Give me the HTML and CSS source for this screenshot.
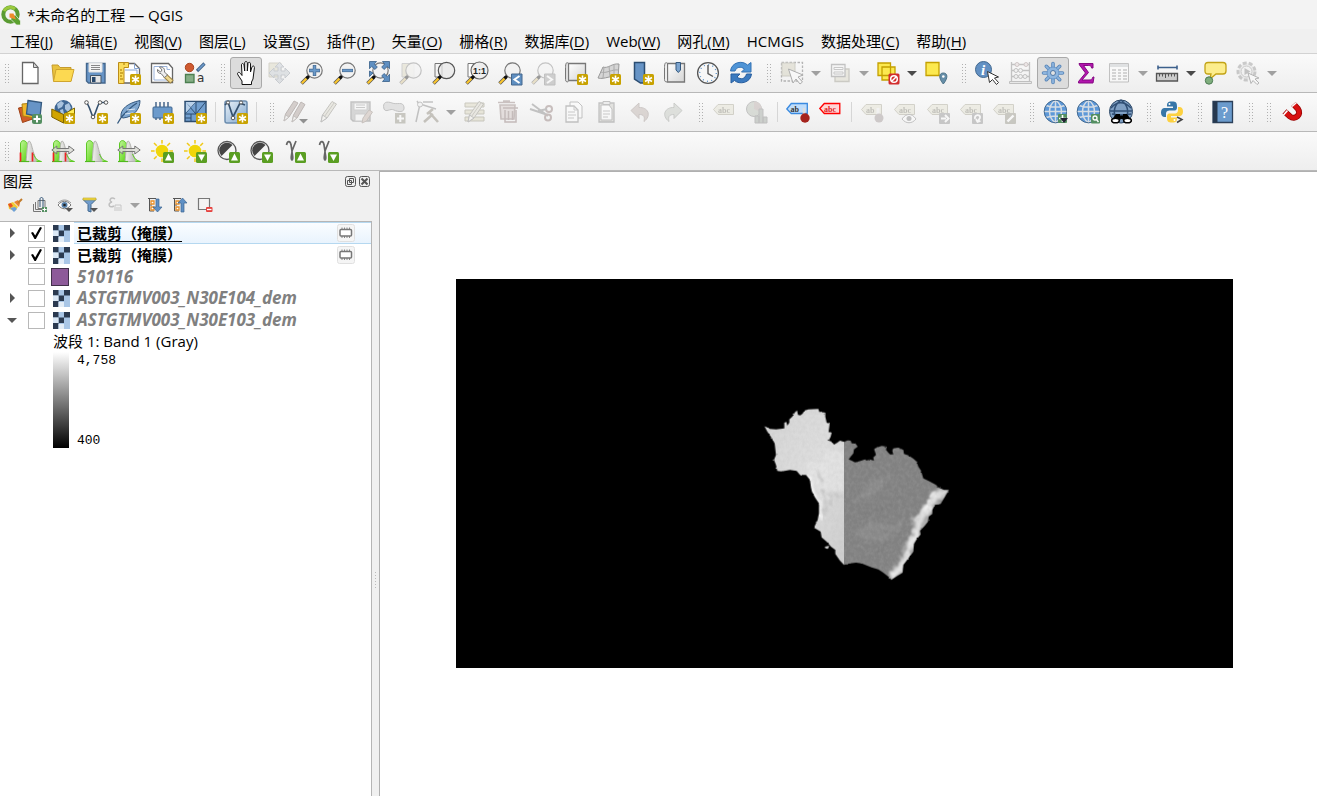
FILE: index.html
```html
<!DOCTYPE html>
<html lang="zh-CN">
<head>
<meta charset="utf-8">
<title>*未命名的工程 — QGIS</title>
<link rel="stylesheet" href="styles.css">
</head>
<body>
<svg class="defs" aria-hidden="true">
  <defs>
    <linearGradient id="g-paper" x1="0" x2="1" y1="0" y2="1"><stop offset="0" stop-color="#fff"/><stop offset="1" stop-color="#d4d4d4"/></linearGradient>
    <linearGradient id="g-blue" x1="0" x2="1" y1="0" y2="1"><stop offset="0" stop-color="#eaf1f8"/><stop offset="1" stop-color="#7fa6cd"/></linearGradient>
    <linearGradient id="g-green" x1="0" x2="1" y1="0" y2="1"><stop offset="0" stop-color="#c2f59c"/><stop offset=".6" stop-color="#7be03c"/><stop offset="1" stop-color="#4fc010"/></linearGradient>
    <linearGradient id="g-gray" x1="0" x2="1" y1="0" y2="0"><stop offset="0" stop-color="#f4f4f0"/><stop offset="1" stop-color="#aaa"/></linearGradient>
  </defs>
  <symbol id="star" viewBox="0 0 24 24"><rect x="13" y="13" width="11" height="11" rx="1.5" fill="#c8a200"/><path d="M18.5 14.5v8M15 16.5l7 4M22 16.5l-7 4" stroke="#fff" stroke-width="1.6"/></symbol>
  <symbol id="up" viewBox="0 0 24 24"><rect x="13" y="13" width="11" height="11" rx="1.5" fill="#5a9e22"/><path d="M18.500 14.500l3.500 7h-7z" fill="#fff"/></symbol>
  <symbol id="down" viewBox="0 0 24 24"><rect x="13" y="13" width="11" height="11" rx="1.500" fill="#5a9e22"/><path d="M18.500 22l3.500-6.500h-7z" fill="#fff"/></symbol>
  <symbol id="handle" viewBox="0 0 24 24"><path d="M1.500 22.500L8 16" stroke="#555" stroke-width="3.600"/><path d="M1.800 22.200L7 17" stroke="#fbc62e" stroke-width="2.200"/><path d="M6.500 17.500L9 15" stroke="#111" stroke-width="3"/></symbol>
  <symbol id="lens" viewBox="0 0 24 24"><circle cx="14.500" cy="9.500" r="7.700" fill="#f1f1f1" fill-opacity=".85" stroke="#777" stroke-width="1.200"/><use href="#handle"/></symbol>
  <symbol id="hist" viewBox="0 0 24 24"><path d="M2.500 22.500V5C3 0 8 1 9.500 5l2 17.500z" fill="url(#g-green)" stroke="#5cc823"/><path d="M8 22.500C9 16 9 2 11 2s3 7 5 13 3 6 5 7.500z" fill="url(#g-gray)" stroke="#b2b2ae"/><path d="M15.500 15c2 5 4 6.500 8 7.500h-5" fill="#9ee36f" stroke="#5cc823"/><path d="M1 22.500h10" stroke="#4fb91d" stroke-width="1.200"/></symbol>
  <symbol id="sides" viewBox="0 0 24 24"><path d="M.8 11l5-4v2.500h12V7l5.400 4-5.400 4v-2.500h-12V15z" fill="#dcdcd6" fill-opacity=".8" stroke="#777"/></symbol>
  <symbol id="tag" viewBox="0 0 24 24"><path d="M1.500 9.500l4.500-5h15.500v10H6z" fill="#e5dfae" stroke="#a49d6b"/></symbol>
  <symbol id="globe" viewBox="0 0 24 24"><circle cx="12.500" cy="11.500" r="11.300" fill="#5d98d8"/><path d="M12.500 0v23M1 11.500h23M3 5.500c6 2 13 2 19 0M3 17.500c6-2 13-2 19 0M12.500 0c-8 6-8 17 0 23M12.500 0c8 6 8 17 0 23" fill="none" stroke="#d6dde4" stroke-width="1.500"/><circle cx="12.500" cy="11.500" r="11.300" fill="none" stroke="#41688f"/></symbol>
  <symbol id="raster" viewBox="0 0 17 17"><rect width="17" height="17" fill="#a9c6e6"/><path d="M0 0h5.500v5.500H0zM11 0h6v5.500h-6zM5.500 5.500H11V11H5.500zM0 11h5.500v6H0z" fill="#2b3a50"/><path d="M5.500 12H11v5H5.500z" fill="#e3edf7"/><path d="M0 5.500h5.500V11H0z" fill="#dbe8f5"/></symbol>
  <symbol id="chip" viewBox="0 0 18 18"><rect x=".5" y=".5" width="17" height="17" rx="2" fill="#f5f5f5" stroke="#e0e0e0"/><path d="M5 3.500v10.500M7.500 3.500v10.500M10 3.500v10.500M12.500 3.500v10.500" stroke="#888"/><rect x="3" y="5.500" width="11.500" height="6.500" rx="1" fill="#fff" stroke="#777" stroke-width="1.500"/></symbol>
  <symbol id="pencil" viewBox="0 0 24 24"><path d="M5 22l1.500-7L16 1.500l4.500 2.500L11 18z" fill="#ddd6b0" stroke="#817b60"/><path d="M5 22l1.500-7 4.500 3z" fill="#f5f0df" stroke="#777"/><path d="M8.500 16.500L18 3" stroke="#968e6a"/></symbol>
</svg>

<header class="titlebar">
  <svg class="logo" viewBox="0 0 20 20"><circle cx="9.500" cy="9.500" r="7.200" fill="none" stroke="#5a9b32" stroke-width="4"/><path d="M3 6a7.200 7.200 0 0 1 11-2" fill="none" stroke="#9bc93c" stroke-width="3"/><path d="M10 10l4.500.2 5 5.800V20h-4L10 14.500z" fill="#5ca12f" stroke="#f3f3f3" stroke-width=".7"/><path d="M8.500 8.500h4l2.500 6-6.500-2z" fill="#ee8b2c"/></svg>
  <h1>*未命名的工程 — QGIS</h1>
</header>

<nav class="menubar" aria-label="菜单">
  <button>工程(<u>J</u>)</button><button>编辑(<u>E</u>)</button><button>视图(<u>V</u>)</button><button>图层(<u>L</u>)</button><button>设置(<u>S</u>)</button><button>插件(<u>P</u>)</button><button>矢量(<u>O</u>)</button><button>栅格(<u>R</u>)</button><button>数据库(<u>D</u>)</button><button>Web(<u>W</u>)</button><button>网孔(<u>M</u>)</button><button>HCMGIS</button><button>数据处理(<u>C</u>)</button><button>帮助(<u>H</u>)</button>
</nav>

<div class="toolbar" role="toolbar" aria-label="工程与地图导航">
  <i class="grip"></i>
  <button aria-label="新建工程"><svg viewBox="0 0 24 24"><path d="M4.500 1.500h11l4.500 5v16H4.500z" fill="#fff" stroke="#666" stroke-width="1.300"/><path d="M15.500 1.500v5H20z" fill="#d8d8d8" stroke="#666"/></svg></button>
  <button aria-label="打开工程"><svg viewBox="0 0 24 24"><path d="M1 4h6l2 2.500h11V20H2.500z" fill="#e9c23e" stroke="#c59b2d"/><path d="M2.500 20.500L5 8.500h18l-3 12z" fill="#fcd951" stroke="#d0a52e"/></svg></button>
  <button aria-label="保存工程"><svg viewBox="0 0 24 24"><path d="M2.500 2.500h18.500v19.500H4.500l-2-2z" fill="#6794c6" stroke="#44678d" stroke-width="1.400"/><path d="M5 2h13v9H5z" fill="#f5f5f5" stroke="#ddd"/><path d="M7 4.500h9M7 6.500h9M7 8.500h9" stroke="#888"/><path d="M6.500 14.500h10.500V22H6.500z" fill="#e4e4e4" stroke="#456"/><path d="M8 16h3.500v5H8z" fill="#27476b"/></svg></button>
  <button aria-label="新建布局"><svg viewBox="0 0 24 24"><path d="M7 2.500h10.500l5 5V22H4z" fill="#fff" stroke="#666" stroke-width="1.300"/><path d="M17.500 2.500v5h5M8 9h12v10" fill="none" stroke="#88a6d4"/><path d="M1.500 1.500h10v5H7v16H1.500z" fill="#fbdc5b" stroke="#bb8c18"/><path d="M3 18h3M3 15h2M3 12h3M3 9h2M7 2v2" stroke="#a47400"/><use href="#star"/></svg></button>
  <button aria-label="布局管理器"><svg viewBox="0 0 24 24"><path d="M1.500 2.500h17l4 4.500v14.500h-21z" fill="#fff" stroke="#666" stroke-width="1.300"/><path d="M4 5.500h13v3h3M4 5.500V19h13" fill="none" stroke="#9cb4db"/><path d="M15 14.500l7 6.500" stroke="#9c8040" stroke-width="5"/><path d="M15.500 15l6 5.500" stroke="#eed890" stroke-width="3"/><path d="M9.500 6c3.500-.5 5.500 1.500 5 5l3 3-3 2.500-3.500-4C8.500 12.500 7 11 7.500 8.500l3 2.500 1.500-2z" fill="#eee" stroke="#777"/></svg></button>
  <button aria-label="样式管理器"><svg viewBox="0 0 24 24"><circle cx="6.500" cy="6.500" r="4.200" fill="#cf5a30" stroke="#a94420"/><path d="M14 10l7.500-7.500" stroke="#44678d" stroke-width="3.200"/><path d="M15 9l6-6" stroke="#6e9bcb" stroke-width="1.600"/><path d="M2.500 13.500h8.500v8H2.500z" fill="#86ae86" stroke="#4c7f50" stroke-width="1.300"/><text x="14" y="21" class="glyph-a">a</text></svg></button>
  <i class="grip"></i>
  <button class="active" aria-label="平移地图" aria-pressed="true"><svg viewBox="0 0 24 24"><path d="M8 23.500V20L4 14c-1.500-2.500 1-3.500 2.500-1.500L8 14.500 7.500 4c0-2 2-2 2.500 0l.7 6V2c0-2 2.600-2 2.600 0v8l.7-7.500c.3-1.800 2.500-1.500 2.500.3L16.500 11l1.500-5c.8-1.800 2.700-1 2.400.8L19 18l-1.500 3v2.500z" fill="#fff" stroke="#111"/></svg></button>
  <button class="off" aria-label="平移到选区"><svg viewBox="0 0 24 24"><path d="M2 2h12v14H2z" fill="#ddd292" stroke="#aaa06b"/><path d="M12.500 1.500L17 6h-3v4h4V7l5 5-5 5v-3h-4v4h3l-4.500 4.500L8 18h3v-4H7v3l-5-5 5-5v3h4V6H8z" fill="#b6c6d8" stroke="#7e94ac"/></svg></button>
  <button aria-label="放大"><svg viewBox="0 0 24 24"><use href="#lens"/><path d="M14.500 4v11M9 9.500h11" stroke="#44678d" stroke-width="3.400"/><path d="M14.500 4.500v10M9.500 9.500h10" stroke="#6a9aca" stroke-width="2"/></svg></button>
  <button aria-label="缩小"><svg viewBox="0 0 24 24"><use href="#lens"/><path d="M9 9.500h11" stroke="#44678d" stroke-width="3.200"/><path d="M9.500 9.500h10" stroke="#6a9aca" stroke-width="2"/></svg></button>
  <button aria-label="全图显示"><svg viewBox="0 0 24 24"><use href="#lens"/><path d="M3.500.5h7L8.300 3l3 3L9 8.500l-3.300-3-2.200 2.200zM23.500.5h-7L18.700 3l-3 3L18 8.500l3.300-3 2.200 2.200zM23.500 20.500h-7l2.200-2.500-3-3 2.300-2.500 3.300 3 2.200-2.200zM3.500 10v5.500L7 12z" fill="#5f8fc1" stroke="#365e88" stroke-width=".8"/></svg></button>
  <button class="off" aria-label="缩放到选区"><svg viewBox="0 0 24 24"><path d="M3 2.500h12V16H3z" fill="#e0d58d" stroke="#999"/><use href="#lens"/></svg></button>
  <button aria-label="缩放到图层"><svg viewBox="0 0 24 24"><path d="M3 2.500h9V16H3z" fill="#f5f5f5" stroke="#777"/><circle cx="14.500" cy="9.500" r="8.200" fill="#ececec" stroke="#555" stroke-width="1.200"/><path d="M10 3.500v12" stroke="#c9c9c9"/><use href="#handle"/></svg></button>
  <button aria-label="缩放到原始分辨率"><svg viewBox="0 0 24 24"><path d="M3 2.500h9V16H3z" fill="#fff" stroke="#777"/><circle cx="14.500" cy="9.500" r="8.500" fill="#eee" stroke="#666" stroke-width="1.200"/><use href="#handle"/><text x="8" y="13" class="ratio">1:1</text></svg></button>
  <button aria-label="上一视图"><svg viewBox="0 0 24 24"><use href="#lens"/><path d="M13.500 13h10.500v11H13.500z" fill="#5f8fc1" stroke="#44678d"/><path d="M21.500 15l-5 3.500 5 3.500" fill="none" stroke="#fff" stroke-width="2"/></svg></button>
  <button class="off" aria-label="下一视图"><svg viewBox="0 0 24 24"><use href="#lens"/><path d="M13.500 13h10.500v11H13.500z" fill="#999" stroke="#777"/><path d="M16 15l5 3.500-5 3.500" fill="none" stroke="#fff" stroke-width="2"/></svg></button>
  <button aria-label="新建地图视图"><svg viewBox="0 0 24 24"><path d="M4.500 2.500h17v17h-17z" fill="url(#g-paper)" stroke="#777" stroke-width="1.300"/><path d="M4.500 2.500c-3-3-3 3-3 4v12c0 3 3 3 3 1z" fill="#ddd" stroke="#777"/><use href="#star"/></svg></button>
  <button aria-label="新建3D地图视图"><svg viewBox="0 0 24 24"><path d="M1 17L6 6c5 2 9-4 16-3l-1 14c-7-4-13 2-20 0z" fill="#d5d5d5" stroke="#999"/><path d="M3.500 11c6 2 11-3 18-2M7 6L6 17M12 5l1 11M17 3v13" fill="none" stroke="#aaa"/><use href="#star"/></svg></button>
  <button aria-label="新建空间书签"><svg viewBox="0 0 24 24"><path d="M4.500 1.500h10v20.500h-4l-6-4z" fill="#6794c6" stroke="#2b4d72" stroke-width="1.500"/><use href="#star"/></svg></button>
  <button aria-label="显示空间书签"><svg viewBox="0 0 24 24"><path d="M4.500 2.500h17v18.500h-17z" fill="url(#g-paper)" stroke="#777" stroke-width="1.300"/><path d="M4.500 2.500c-3-3-3 3-3 4v12c0 3 3 3 3 1z" fill="#eee" stroke="#777"/><path d="M13 1.500h4.500V9l-2.200 2.500L13 9z" fill="#7ca4cf" stroke="#34597f"/></svg></button>
  <button aria-label="时态控制器"><svg viewBox="0 0 24 24"><circle cx="12" cy="12" r="10.400" fill="#f7f7f7" stroke="#555" stroke-width="1.300"/><circle cx="12" cy="12" r="8.300" fill="none" stroke="#5b92c9" stroke-width="1.300" stroke-dasharray="1 3.340"/><path d="M12 4v8.500l5 3" fill="none" stroke="#555" stroke-width="1.400"/></svg></button>
  <button aria-label="刷新"><svg viewBox="0 0 24 24"><path d="M1.500 10c1-9 12-11 17-6l3.500-2.500v9.500h-9.500l3-3c-4-3-8-2-9.500 2z" fill="#4f94d6" stroke="#3472b4"/><path d="M22.500 13c-1 9-12 11-17 6.500L2 22v-9h9l-3 3c4 3 8 2 9.500-3z" fill="#3b7abf" stroke="#285f9f"/></svg></button>
  <i class="grip"></i>
  <button class="off" aria-label="选择要素"><svg viewBox="0 0 24 24"><path d="M1.500 1.500h21v18.500h-21z" fill="none" stroke="#555" stroke-width="1.300" stroke-dasharray="2.500 1.500"/><path d="M2 2h13v13H2z" fill="#d1cb91" stroke="#999366"/><path d="M8.500 8l14.500 6-5 2 4.500 5-2.500 2-4-5-3 4z" fill="#fff" stroke="#444"/></svg></button><button class="drop off" aria-label="选择菜单"></button>
  <button class="off" aria-label="按值选择"><svg viewBox="0 0 24 24"><path d="M7 8h14v12.500H7z" fill="#ddd6a5" stroke="#99936e" stroke-width="1.400"/><path d="M3.500 3.500H17v12H3.500z" fill="#f4f4f4" stroke="#777" stroke-width="1.300"/><path d="M6 6.500h9v2H6zM6 11h9v2H6z" fill="#fff" stroke="#888"/></svg></button><button class="drop off" aria-label="按值选择菜单"></button>
  <button aria-label="取消选择"><svg viewBox="0 0 24 24"><path d="M2 2h12.500v12.500H2zM6 6h13v13H6z" fill="#fce94f" stroke="#c4a000" stroke-width="1.300"/><rect x="12.500" y="12.500" width="11" height="11" rx="1.500" fill="#d22d2d"/><circle cx="18" cy="18" r="3.300" fill="none" stroke="#fff" stroke-width="1.500"/><path d="M15.500 20.500l5-5" stroke="#fff" stroke-width="1.500"/></svg></button><button class="drop" aria-label="取消选择菜单"></button>
  <button aria-label="按位置选择"><svg viewBox="0 0 24 24"><path d="M2 1.500h13v13H2z" fill="#fce94f" stroke="#c4a000" stroke-width="1.300"/><path d="M19.300 23c-5-6-4.500-11 0-11s5 5 0 11z" fill="#668ea8" stroke="#4c7288"/><circle cx="19.300" cy="15.500" r="1.300" fill="#fff"/></svg></button>
  <i class="grip"></i>
  <button aria-label="识别要素"><svg viewBox="0 0 24 24"><circle cx="8.500" cy="8.500" r="8" fill="#6290c3" stroke="#41688f"/><text x="6" y="13.500" class="info">i</text><path d="M12.500 10.500l11 5.500-4 1 4 4.500-2 2-4-5-3 3z" fill="#fff" stroke="#333"/></svg></button>
  <button class="off" aria-label="字段计算器"><svg viewBox="0 0 24 24"><path d="M3.500 1v20M21.500 1v20M3 3.500h19M3 9.500h19M3 15.500h19" fill="none" stroke="#777" stroke-width="1.300"/><path d="M1.500 20.500h22v2h-22z" fill="#ddd" stroke="#777"/><g fill="#eee" stroke="#777"><circle cx="8" cy="9.500" r="2"/><circle cx="12.500" cy="9.500" r="2"/><circle cx="8" cy="15.500" r="2"/><circle cx="12.500" cy="15.500" r="2"/><circle cx="17" cy="15.500" r="2"/></g><g fill="#ecc" stroke="#a77"><circle cx="9" cy="3.500" r="2"/><circle cx="18" cy="3.500" r="2"/></g></svg></button>
  <button class="active" aria-label="处理工具箱" aria-pressed="true"><svg viewBox="0 0 24 24"><g stroke="#5b87b8" stroke-width="3.600" stroke-linecap="round"><path d="M12 2.500v19M2.500 12h19M5.300 5.300l13.400 13.400M18.700 5.300L5.300 18.700"/></g><g stroke="#8db5df" stroke-width="1.800" stroke-linecap="round"><path d="M12 2.500v19M2.500 12h19M5.300 5.300l13.400 13.400M18.700 5.300L5.300 18.700"/></g><circle cx="12" cy="12" r="6" fill="#8db5df" stroke="#6997c9"/><circle cx="12" cy="12" r="2.500" fill="#e3e3e3" stroke="#5077a5"/></svg></button>
  <button aria-label="统计摘要"><svg viewBox="0 0 24 24"><path d="M5 2.500h14V7h-1.500c0-2-1-2.500-3-2.500H9.500l5 7L8 19h7c2 0 3-.5 4-3h1l-1 6H4.500v-1.500l7-8.500-6-8z" fill="#b215ae" stroke="#850a82"/></svg></button>
  <button class="off" aria-label="打开属性表"><svg viewBox="0 0 24 24"><path d="M2.500 2.500h19v18.500h-19z" fill="#fff" stroke="#777"/><path d="M3 3h18v3H3z" fill="#bbc3cc"/><path d="M5 9h4M11 9h3M16 9h4M5 12h4M11 12h3M16 12h4M5 15h4M11 15h3M16 15h4M5 18h4M11 18h3M16 18h4" stroke="#888" stroke-width="1.300"/></svg></button><button class="drop off" aria-label="属性表菜单"></button>
  <button aria-label="测量"><svg viewBox="0 0 24 24"><path d="M3 6.500h19M3 4.500v4M22 4.500v4" stroke="#3c608c" stroke-width="1.600"/><path d="M1.500 12.500h21v7.500h-21z" fill="#ccc" stroke="#555" stroke-width="1.300"/><path d="M4.500 12.500v3M7.500 12.500v3M10.500 12.500v4.500M13.500 12.500v3M16.500 12.500v3M19.500 12.500v3" stroke="#555"/></svg></button><button class="drop" aria-label="测量菜单"></button>
  <button aria-label="地图提示"><svg viewBox="0 0 24 24"><path d="M5 1.500h15q3 0 3 3V10q0 3-3 3h-7l-6 5 1-5H5q-3 0-3-3V4.500q0-3 3-3z" fill="#fced8c" stroke="#c2a316" stroke-width="1.300"/><circle cx="6" cy="19.500" r="3.700" fill="#7fae7d" stroke="#4c7a52"/></svg></button>
  <button class="off" aria-label="运行动作"><svg viewBox="0 0 24 24"><circle cx="10.500" cy="10.500" r="8.500" fill="#ddd" stroke="#888" stroke-width="3" stroke-dasharray="4 2"/><circle cx="10.500" cy="10.500" r="5.500" fill="#eee" stroke="#888"/><path d="M8.500 7v7l6-3.500z" fill="#777"/><path d="M12 12l11 5-4 1 4 4-2 1.500-4-4-2 3z" fill="#fff" stroke="#555"/></svg></button><button class="drop off" aria-label="动作菜单"></button>
</div>

<div class="toolbar" role="toolbar" aria-label="图层与编辑">
  <i class="grip"></i>
  <button aria-label="数据源管理器"><svg viewBox="0 0 24 24"><path d="M.5 8l11-2 3 13-10 3.500z" fill="#d05d28" stroke="#9e4015"/><path d="M4 4l12-1 1 15-12-2z" fill="#f0b72b" stroke="#ae8010"/><path d="M10 .5l13.500 2L22 17 8.500 14z" fill="#6794c6" stroke="#34597f" stroke-width="1.300"/><rect x="14" y="14" width="10" height="10" rx="2" fill="#548f61"/><path d="M19 15.500v7M15.500 19h7" stroke="#fff" stroke-width="2"/></svg></button>
  <button aria-label="新建GeoPackage图层"><svg viewBox="0 0 24 24"><circle cx="12.500" cy="9" r="9" fill="#3f6794"/><path d="M6 4l4-3 3 2-2 4-4 2zM14 5l4-2 2 5-3 4-3-3zM9 10l3-1 1 5h-3z" fill="#a9c3de"/><path d="M.8 9l11.700 5.500V23L.8 17z" fill="#d1a400" stroke="#7c6100"/><path d="M12.500 14.500L23.500 8v9l-11 6z" fill="#ffec55" stroke="#806800"/><use href="#star"/></svg></button>
  <button aria-label="新建Shapefile图层"><svg viewBox="0 0 24 24"><path d="M2.500 2.500C5 5 7 13 9 17c3-3 4-12 7-14.500h6" fill="none" stroke="#34506e" stroke-width="1.600"/><g fill="#fff" stroke="#555"><circle cx="2.500" cy="2.500" r="1.800"/><circle cx="9" cy="17" r="1.800"/><circle cx="16" cy="2.500" r="1.800"/><circle cx="22" cy="2.500" r="1.800"/></g><use href="#star"/></svg></button>
  <button aria-label="新建SpatiaLite图层"><svg viewBox="0 0 24 24"><path d="M4 17C3 9 11 3 23 .5 23 9 17 17 6 18z" fill="#7fa7d0" stroke="#34597f"/><path d="M.5 23.500L4.500 17C9 12 15 6 20 3" fill="none" stroke="#34597f" stroke-width="1.300"/><path d="M8 14l8-1M10 10l8-1" stroke="#dce8f4"/><use href="#star"/></svg></button>
  <button aria-label="新建临时图层"><svg viewBox="0 0 24 24"><path d="M6 2v18M10 2v18M14 2v18M18 2v18" stroke="#526f91" stroke-width="1.600"/><rect x="3" y="7" width="19" height="11" rx="1" fill="#6c9acb" stroke="#3e6690"/><use href="#star"/></svg></button>
  <button aria-label="新建网格图层"><svg viewBox="0 0 24 24"><path d="M2 1.500h21v20H2z" fill="#729fcf" stroke="#2d4d70" stroke-width="1.400"/><path d="M2 14h21M13 1.500v12.500M8 14v7.500M2 1.500L13 14M13 1.500L2 14M13 14L23 1.500M2 18h6" fill="none" stroke="#2d4d70"/><path d="M2.500 2h10L8 7zM3 2.500v10L7.500 7.500z" fill="#b9d1e9"/><use href="#star"/></svg></button>
  <i class="sep"></i>
  <button aria-label="新建虚拟图层"><svg viewBox="0 0 24 24"><rect x="1" y="1" width="22" height="22" rx="2" fill="url(#g-blue)" stroke="#6b8cae" stroke-width="1.500"/><path d="M1 5l3-3 5 15 7-14 5 2" fill="none" stroke="#34506e" stroke-width="1.700"/><g fill="#fff" stroke="#555"><circle cx="4" cy="2.500" r="1.600"/><circle cx="9" cy="18" r="1.800"/><circle cx="17" cy="2.500" r="1.600"/></g><use href="#star"/></svg></button>
  <i class="sep"></i>
  <i class="grip"></i>
  <button class="off" aria-label="当前编辑"><svg viewBox="0 0 24 24"><path d="M1 21l1.500-7L11 1l4 2L6 17zM9 22l1.500-7L18 2l4 2.500L14 18z" fill="#b58f80" stroke="#7b5548"/><path d="M1 21l1.500-6L6 17zM9 22l1.500-6 3.500 2z" fill="#f4eee9" stroke="#8b7468"/><path d="M16 19h9l-4.500 4.500z" fill="#000"/></svg></button>
  <button class="off" aria-label="切换编辑"><svg viewBox="0 0 24 24"><use href="#pencil"/></svg></button>
  <button class="off" aria-label="保存编辑"><svg viewBox="0 0 24 24"><path d="M2 2h19v19H4l-2-2z" fill="#aaa" stroke="#777" stroke-width="1.400"/><path d="M5 3h13v7H5zM6 14h10v7H6z" fill="#f5f5f5" stroke="#999"/><path d="M7 5h9M7 7.500h9" stroke="#888"/><path d="M13 23l1-5 6-8 3.500 2-6 9z" fill="#d9a88c" stroke="#987762"/></svg></button>
  <button class="off" aria-label="添加多边形"><svg viewBox="0 0 24 24"><path d="M2 9C0 2 5 1 10 3s11-2 12 4-6 5-10 3-8 3-10-1z" fill="#c4c4c4" stroke="#777"/><rect x="13" y="13" width="10.500" height="10.500" fill="#8e8961"/><path d="M18.300 15v7M15 18.500h7" stroke="#fff" stroke-width="2"/></svg></button>
  <button class="off" aria-label="顶点工具"><svg viewBox="0 0 24 24"><path d="M1 22L5 4l16 5M4 4L2 1M8 2h10" fill="none" stroke="#777" stroke-width="1.500"/><circle cx="5" cy="4.500" r="2.500" fill="#eee" stroke="#777"/><path d="M9 22l9-8M14 12l9 10M12 14l6-5" stroke="#8a7954" stroke-width="2.600"/></svg></button><button class="drop off" aria-label="顶点工具菜单"></button>
  <button class="off" aria-label="修改属性"><svg viewBox="0 0 24 24"><path d="M2 3h19v4H2zM2 10h19v4H2zM2 17h19v4H2z" fill="#ddd288" stroke="#8f874d"/><use href="#pencil"/></svg></button>
  <button class="off" aria-label="删除所选"><svg viewBox="0 0 24 24"><path d="M2 2.500h17M7 1h7M4 5h15l-1 14H5z" fill="#ddb9b0" stroke="#a06d65" stroke-width="1.600"/><path d="M7 8h15M9 10v12h11V10M12.500 11v9M16.500 11v9" fill="none" stroke="#9b625c" stroke-width="1.500"/></svg></button>
  <button class="off" aria-label="剪切"><svg viewBox="0 0 24 24"><path d="M1 9l18 6M3 4l16 12" stroke="#777" stroke-width="2"/><circle cx="20" cy="9" r="3" fill="none" stroke="#a2665d" stroke-width="2"/><circle cx="19" cy="17.500" r="3" fill="none" stroke="#a2665d" stroke-width="2"/><path d="M9 11l9-2" stroke="#777" stroke-width="2"/></svg></button>
  <button class="off" aria-label="复制"><svg viewBox="0 0 24 24"><path d="M8 2h8l4 4v12H8z" fill="#fff" stroke="#777"/><path d="M4 6h8l4 4v12H4z" fill="#fff" stroke="#777" stroke-width="1.300"/><path d="M6 12h7M6 15h8M6 18h6M12 6v4h4" fill="none" stroke="#888"/></svg></button>
  <button class="off" aria-label="粘贴"><svg viewBox="0 0 24 24"><path d="M4 3h15v19H4z" fill="#c9c5b5" stroke="#777" stroke-width="1.300"/><path d="M6 5h8l3 4v11H6z" fill="#fff" stroke="#777"/><path d="M8 1.500h7v3H8z" fill="#ddd" stroke="#777"/><path d="M8 11h7M8 14h7M8 17h5" stroke="#888"/></svg></button>
  <button class="off" aria-label="撤销"><svg viewBox="0 0 24 24"><path d="M3 10.500L11 3v4.500c9-.5 13 8 5 14 1-5 0-7-5-7v4z" fill="#c7a395" stroke="#9f8077"/></svg></button>
  <button class="off" aria-label="重做"><svg viewBox="0 0 24 24"><path d="M21 10.500L13 3v4.500c-9-.5-13 8-5 14-1-5 0-7 5-7v4z" fill="#b6c2ae" stroke="#858f80"/></svg></button>
  <i class="grip"></i>
  <button class="off" aria-label="图层标注"><svg viewBox="0 0 24 24"><use href="#tag"/><text x="6" y="12.500" class="tagtext" fill="#77724e">abc</text></svg></button>
  <button class="off" aria-label="图表选项"><svg viewBox="0 0 24 24"><circle cx="9" cy="9" r="7.500" fill="#a9b99b" stroke="#777"/><path d="M9 9V1.500A7.500 7.500 0 0 1 16 12z" fill="#c29991"/><path d="M10 16h4v7h-4zM14 9h4v14h-4zM18 17h4v6h-4z" fill="#8da08c" stroke="#777"/></svg></button>
  <i class="sep"></i>
  <button aria-label="高亮固定标注"><svg viewBox="0 0 24 24"><path d="M.8 9l4.500-5.500h16v10h-16z" fill="#bfddfb" stroke="#3a8ae0" stroke-width="1.300"/><text x="4.500" y="11.800" class="tagtext" fill="#333">ab</text><path d="M18 8v7" stroke="#ddd" stroke-width="2.500"/><circle cx="19" cy="18" r="4.700" fill="#a5231d"/></svg></button>
  <button aria-label="未放置标注"><svg viewBox="0 0 24 24"><path d="M.8 8.500l4.500-5h15.500v10H5.300z" fill="#ffd5d5" stroke="#f00" stroke-width="1.300"/><text x="5" y="11.800" class="tagtext" fill="#d22">abc</text></svg></button>
  <i class="sep"></i>
  <button class="off" aria-label="固定标注"><svg viewBox="0 0 24 24"><use href="#tag"/><text x="6" y="12.500" class="tagtext" fill="#77724e">ab</text><path d="M18 8v7" stroke="#eee" stroke-width="3"/><circle cx="19" cy="18" r="4.500" fill="#a58989"/></svg></button>
  <button class="off" aria-label="显示隐藏标注"><svg viewBox="0 0 24 24"><use href="#tag"/><text x="6" y="12.500" class="tagtext" fill="#77724e">abc</text><path d="M9 19c4-6 10-6 14 0-4 5-10 5-14 0z" fill="#fff" stroke="#777"/><circle cx="16" cy="18.500" r="2.500" fill="#777"/></svg></button>
  <button class="off" aria-label="移动标注"><svg viewBox="0 0 24 24"><use href="#tag"/><text x="6" y="12.500" class="tagtext" fill="#77724e">abc</text><rect x="13" y="13" width="11" height="11" rx="1" fill="#888"/><path d="M15 18.500h5M19 15l3.500 3.500L19 22" fill="none" stroke="#fff" stroke-width="2"/></svg></button>
  <button class="off" aria-label="旋转标注"><svg viewBox="0 0 24 24"><use href="#tag"/><text x="6" y="12.500" class="tagtext" fill="#77724e">abc</text><rect x="13" y="13" width="11" height="11" rx="1" fill="#888"/><path d="M16 19c-1-5 6-5 5-1l-2 3M17 19l1.500 3 3-1" fill="none" stroke="#fff" stroke-width="1.800"/></svg></button>
  <button class="off" aria-label="修改标注"><svg viewBox="0 0 24 24"><use href="#tag"/><text x="6" y="12.500" class="tagtext" fill="#77724e">abc</text><rect x="13" y="13" width="11" height="11" rx="1" fill="#8f8a64"/><path d="M15.500 21.500l6-6" stroke="#fff" stroke-width="2.400"/></svg></button>
  <i class="grip"></i>
  <button aria-label="添加底图"><svg viewBox="0 0 24 24"><use href="#globe"/><rect x="15" y="14" width="9" height="9" rx="1" fill="#548f61"/><path d="M19.500 15v7M16 18.500h7" stroke="#fff" stroke-width="1.600"/><path d="M17 18h8l-4 5z" fill="#223"/></svg></button>
  <button aria-label="搜索服务"><svg viewBox="0 0 24 24"><use href="#globe"/><rect x="15" y="14" width="9" height="9.500" rx="1" fill="#548f61"/><circle cx="19" cy="18" r="2" fill="none" stroke="#fff" stroke-width="1.300"/><path d="M20.500 19.500l2 2.500" stroke="#fff" stroke-width="1.400"/></svg></button>
  <button aria-label="元数据搜索"><svg viewBox="0 0 24 24"><circle cx="12" cy="11.500" r="11.500" fill="#7f9fc3" stroke="#2c4765"/><path d="M2 8c6-7 13-7 20 0M3 14c5 1 14 1 19 0M12 0c-9 7-7 15-4 20M12 0c9 7 7 15 4 20M1 11h22" fill="none" stroke="#304f75" stroke-width="1.500"/><path d="M7 14h4v1.500h3V14h4l5 7-4.500 2-5.500-4h-1L7 23l-5-2z" fill="#000"/><ellipse cx="6.500" cy="20.500" rx="3.800" ry="2.300" fill="#fff" stroke="#000" stroke-width="1.600"/><ellipse cx="18.500" cy="20.500" rx="3.800" ry="2.300" fill="#fff" stroke="#000" stroke-width="1.600"/></svg></button>
  <i class="grip"></i>
  <button aria-label="Python控制台"><svg viewBox="0 0 24 24"><path d="M12 1.500c-5 0-5 2-5 5h6v1.500H4c-4 0-4 9 0 9h2v-3c0-3 2-3.500 4-3.500h4c3 0 3-2 3-4 0-4-1-5-5-5z" fill="#3776a8"/><circle cx="9.500" cy="4" r="1" fill="#fff"/><path d="M12 22.500c5 0 5-2 5-5h-6V16h9c4 0 4-9 0-9h-2v3c0 3-2 3.500-4 3.500h-4c-3 0-3 2-3 4 0 4 1 5 5 5z" fill="#fdd140"/><circle cx="14.500" cy="20" r="1" fill="#fff"/><path d="M17 17l5 2.500-5 3" fill="none" stroke="#444" stroke-width="1.500"/></svg></button>
  <i class="grip"></i>
  <button aria-label="帮助内容"><svg viewBox="0 0 24 24"><path d="M2 1.500h19.500v21H2z" fill="#6b9bcd" stroke="#2c405a" stroke-width="1.300"/><path d="M2 1.500h4.500v21H2z" fill="#26384f"/><text x="10" y="17.500" class="question">?</text></svg></button>
  <i class="grip"></i>
  <i class="grip"></i>
  <button aria-label="启用捕捉"><svg viewBox="0 0 24 24"><path d="M4.500 11.500l5.500 5c5 4 12-2 8-7.500l-4.500-5" fill="none" stroke="#900" stroke-width="6"/><path d="M5 12l5 4.500c5 4 12-2 8-7.500l-4-4.500" fill="none" stroke="#d80f0f" stroke-width="4.400"/><path d="M7.500 10.500l-4 4.500M12 6.500l4.500-4" stroke="#fff" stroke-width="1.600"/></svg></button>
</div>

<div class="toolbar" role="toolbar" aria-label="栅格拉伸">
  <i class="grip"></i>
  <button aria-label="局部累计剪切拉伸"><svg viewBox="0 0 24 24"><use href="#hist"/><path d="M2.500 13.500v9M14.500 13.500v9" stroke="#e22" stroke-width="1.700"/></svg></button>
  <button aria-label="全局累计剪切拉伸"><svg viewBox="0 0 24 24"><use href="#hist"/><path d="M2.500 13.500v9M14.500 13.500v9" stroke="#e22" stroke-width="1.700"/><use href="#sides"/></svg></button>
  <button aria-label="局部直方图拉伸"><svg viewBox="0 0 24 24"><use href="#hist"/></svg></button>
  <button aria-label="全局直方图拉伸"><svg viewBox="0 0 24 24"><use href="#hist"/><use href="#sides"/></svg></button>
  <button aria-label="提高亮度"><svg viewBox="0 0 24 24"><path d="M12 1v22M1 12h22M4 4l16 16M20 4L4 20" stroke="#f0c915" stroke-width="1.500"/><circle cx="12" cy="12" r="7.500" fill="#f6f6f6"/><circle cx="12" cy="12" r="6.300" fill="#f0d60a"/><use href="#up"/></svg></button>
  <button aria-label="降低亮度"><svg viewBox="0 0 24 24"><path d="M12 1v22M1 12h22M4 4l16 16M20 4L4 20" stroke="#f0c915" stroke-width="1.500"/><circle cx="12" cy="12" r="7.500" fill="#f6f6f6"/><circle cx="12" cy="12" r="6.300" fill="#f0d60a"/><use href="#down"/></svg></button>
  <button aria-label="提高对比度"><svg viewBox="0 0 24 24"><circle cx="11" cy="11.500" r="9" fill="#f5f5f5" stroke="#555" stroke-width="1.300"/><path d="M5.500 17L16.500 6a7.500 7.500 0 0 0-11 11z" fill="#444"/><use href="#up"/></svg></button>
  <button aria-label="降低对比度"><svg viewBox="0 0 24 24"><circle cx="11" cy="11.500" r="9" fill="#f5f5f5" stroke="#555" stroke-width="1.300"/><path d="M5.500 17L16.500 6a7.500 7.500 0 0 0-11 11z" fill="#444"/><use href="#down"/></svg></button>
  <button aria-label="提高伽马"><svg viewBox="0 0 24 24"><path d="M4.500 6c1-5 4-4 4.500 0l1 6c0 4-2 8 0 9 2-1 0-5 0-9l4-10" fill="none" stroke="#666" stroke-width="1.700"/><use href="#up"/></svg></button>
  <button aria-label="降低伽马"><svg viewBox="0 0 24 24"><path d="M4.500 6c1-5 4-4 4.500 0l1 6c0 4-2 8 0 9 2-1 0-5 0-9l4-10" fill="none" stroke="#666" stroke-width="1.700"/><use href="#down"/></svg></button>
</div>

<main class="workspace">
  <aside class="dock">
    <div class="dock-title">
      <h2>图层</h2>
      <button aria-label="浮动"><svg viewBox="0 0 11 11"><rect x=".5" y=".5" width="10" height="10" rx="2" fill="none" stroke="#555"/><path d="M4.500 2.500h4v4h-4zM2.500 4.500h4v4h-4z" fill="#f0f0f0" stroke="#555"/></svg></button>
      <button aria-label="关闭"><svg viewBox="0 0 11 11"><rect x=".5" y=".5" width="10" height="10" rx="2" fill="none" stroke="#555"/><path d="M2.500 2.500l6 6M8.500 2.500l-6 6" stroke="#555" stroke-width="2"/></svg></button>
    </div>
    <div class="dock-tools" role="toolbar" aria-label="图层面板">
      <button aria-label="图层样式"><svg viewBox="0 0 16 16"><path d="M1 7l5-2 5 5-3 4-6-2z" fill="#f1cb36"/><path d="M1 7l3-1 2 3-3 2z" fill="#e55324"/><path d="M3 11l5-1 2 2-3 3z" fill="#6da0d9"/><path d="M7 5l5 5 1-4-2-3z" fill="#e98532"/><path d="M11 6l4-4" stroke="#c27b2a" stroke-width="2"/></svg></button>
      <button aria-label="添加组"><svg viewBox="0 0 16 16"><path d="M1.500 7v7.500H9M3.500 5v7.500h7M6 3.500h7v8H6z" fill="none" stroke="#777"/><path d="M8 10V2c0-2 3-2 3 0v8" fill="none" stroke="#357"/><path d="M10 10h5v5h-5z" fill="#548f61"/><path d="M12.500 10.500v4M10.500 12.500h4" stroke="#fff"/></svg></button>
      <button aria-label="管理地图主题"><svg viewBox="0 0 16 16"><path d="M1 8c4-5 9-5 13 0-4 5-9 5-13 0z" fill="#fff" stroke="#777"/><path d="M1 6c4-4 9-4 13 0" fill="none" stroke="#999"/><circle cx="7.500" cy="8" r="3" fill="#557fa9"/><circle cx="7.500" cy="8" r="1.300" fill="#222"/><path d="M8 11h8l-4 4z" fill="#555"/></svg></button>
      <button aria-label="过滤图例"><svg viewBox="0 0 16 16"><path d="M1 2.500l5 5V14l3 1V7.500l5-5z" fill="#6f9bcb" stroke="#446a91"/><path d="M1 1h13v2H1z" fill="#f4dc43" stroke="#b9a123" stroke-width=".6"/><path d="M8 11h8l-4 4z" fill="#555"/></svg></button>
      <button class="off" aria-label="按表达式过滤"><svg viewBox="0 0 16 16"><path d="M8 2C4-1 1 4 5 5 0 6 2 12 7 9" fill="none" stroke="#777" stroke-width="1.500"/><path d="M8 14V8h6v6M10 14v-4M12 14v-4" fill="none" stroke="#888"/></svg></button><button class="drop off" aria-label="表达式菜单"></button>
      <button aria-label="全部展开"><svg viewBox="0 0 16 16"><path d="M1 1.500h8M2.500 2v12H7M2.500 8H5" fill="none" stroke="#555"/><path d="M4 4h3v3H4zM4 10h3v3H4z" fill="#fff" stroke="#e89029" stroke-width="1.300"/><path d="M9 2h3v8h3l-4.500 5L6 10h3z" fill="#5e90c5" stroke="#3c648f" stroke-width=".7"/></svg></button>
      <button aria-label="全部折叠"><svg viewBox="0 0 16 16"><path d="M1 1.500h8M2.500 2v12H7M2.500 8H5" fill="none" stroke="#555"/><path d="M4 4h3v3H4zM4 10h3v3H4z" fill="#fff" stroke="#e89029" stroke-width="1.300"/><path d="M9 15h3V6h3l-4.500-5L6 6h3z" fill="#5e90c5" stroke="#3c648f" stroke-width=".7"/></svg></button>
      <button aria-label="移除图层"><svg viewBox="0 0 16 16"><path d="M1.500 1.500h11v11h-11z" fill="#f4f4f4" stroke="#777" stroke-width="1.200"/><rect x="9" y="10" width="6.500" height="5" rx="1" fill="#e6413e"/><path d="M10 12.500h4.500" stroke="#fff" stroke-width="1.300"/></svg></button>
    </div>
    <div class="tree">
      <div class="row selected"><button class="twist" aria-label="展开"></button><input type="checkbox" id="l1" checked><svg class="kind"><use href="#raster"/></svg><label for="l1"><u>已裁剪（掩膜）</u></label><svg class="mem"><use href="#chip"/></svg></div>
      <div class="row"><button class="twist" aria-label="展开"></button><input type="checkbox" id="l2" checked><svg class="kind"><use href="#raster"/></svg><label for="l2">已裁剪（掩膜）</label><svg class="mem"><use href="#chip"/></svg></div>
      <div class="row short hidden-layer"><span class="twist-gap"></span><input type="checkbox" id="l3"><span class="swatch"></span><label for="l3">510116</label></div>
      <div class="row hidden-layer"><button class="twist" aria-label="展开"></button><input type="checkbox" id="l4"><svg class="kind"><use href="#raster"/></svg><label for="l4">ASTGTMV003_N30E104_dem</label></div>
      <div class="row hidden-layer"><button class="twist open" aria-label="折叠"></button><input type="checkbox" id="l5"><svg class="kind"><use href="#raster"/></svg><label for="l5">ASTGTMV003_N30E103_dem</label></div>
      <div class="legend">
        <p>波段 1: Band 1 (Gray)</p>
        <div class="ramp"><span class="bar"></span><span class="limits"><span>4,758</span><span>400</span></span></div>
      </div>
    </div>
  </aside>
  <div class="splitter"></div>
  <section class="canvas" aria-label="地图">
    <svg class="map" viewBox="0 0 777 389">
      <defs>
        <filter id="jag" x="0" y="0" width="100%" height="100%"><feTurbulence type="fractalNoise" baseFrequency=".25" numOctaves="2" seed="3" result="n"/><feDisplacementMap in="SourceGraphic" in2="n" scale="6" xChannelSelector="R" yChannelSelector="G"/></filter>
        <mask id="area" maskUnits="userSpaceOnUse" x="0" y="0" width="640" height="580"><path filter="url(#jag)" fill="#fff" d="M43 78L51 82 60 87 78 88 103 85 103 68 109 66 112 77 118 68 118 58 127 50 134 38 141 31 144 45 151 46 158 41 163 32 175 28 205 27 208 36 226 38 226 50 230 68 239 72 236 95 245 98 242 110 236 122 245 125 252 134 262 128 270 122 282 126 293 121 302 122 305 130 316 130 323 140 312 148 310 160 302 170 296 178 305 182 315 187 332 183 345 178 350 182 358 178 372 182 370 172 378 165 375 155 372 147 382 142 395 138 410 140 408 150 415 158 420 163 430 163 427 152 430 145 445 143 460 150 462 162 475 166 490 176 500 185 505 200 513 212 520 235 540 245 558 255 565 262 582 270 597 270 585 290 572 312 555 315 547 330 547 342 536 350 534 365 524 378 510 392 512 403 500 418 492 432 490 455 475 475 460 495 458 518 435 532 424 540 415 530 400 518 385 508 365 502 350 496 335 490 318 488 300 490 282 495 270 482 256 462 256 450 243 440 230 425 215 412 212 395 192 383 203 360 207 340 207 310 195 292 186 275 183 262 180 240 168 225 150 225 140 213 120 210 95 214 82 213 78 195 72 180 78 165 74 130 66 115 52 95ZM225 440l11-2 3 3-7 6-7-3z"/></mask>
        <filter id="rough" x="0" y="0" width="100%" height="100%"><feTurbulence type="fractalNoise" baseFrequency=".09" numOctaves="5" seed="8"/><feColorMatrix values="0 0 0 0 .5  0 0 0 0 .5  0 0 0 0 .5  0 1.400 0 0 -.5"/></filter>
        <filter id="ridge"><feTurbulence type="fractalNoise" baseFrequency=".08" numOctaves="3" seed="4" result="n"/><feDisplacementMap in="SourceGraphic" in2="n" scale="22" result="d"/><feGaussianBlur in="d" stdDeviation="3"/></filter>
        <linearGradient id="west" x1="0" x2="1" y1="0" y2="1"><stop offset="0" stop-color="#d4d4d4"/><stop offset=".5" stop-color="#dedede"/><stop offset="1" stop-color="#cecece"/></linearGradient>
      </defs>
      <rect width="777" height="389"/>
      <g transform="translate(294 121) scale(.3333)">
        <g mask="url(#area)" shape-rendering="crispEdges">
          <rect x="30" y="20" width="252" height="490" fill="url(#west)"/>
          <path d="M166 180l42 10 25-40 48 5v120l-35-5-35 50-6-45-25-50z" fill="#e5e5e5" opacity=".8" filter="url(#ridge)"/>
          <path d="M175 225l15 50 20 35 5 50" fill="none" stroke="#f2f2f2" stroke-width="12" filter="url(#ridge)"/>
          <path d="M205 210l11 35-2 25 20 14 45 5M215 270l15 40-8 35M245 280l-7 35" fill="none" stroke="#c4c4c4" stroke-width="4" filter="url(#ridge)"/>
          <rect x="282" y="110" width="330" height="440" fill="#818181"/>
          <path d="M310 400l50-35 75 10 35-20-55 70-70-5zM300 310l70-70 60-20-65 70z" fill="#8a8a8a" filter="url(#ridge)"/>
          <path d="M325 360l35-25 50-10 40-35M365 400l40-10 45 15M345 470l50-20 30-50" fill="none" stroke="#777" stroke-width="3" filter="url(#ridge)"/>
          <path d="M565 262l-25 25-10 35-45 35v40l-22 35-10 40-35 50 35 10 35-60 60-120 50-90z" fill="#aaa" filter="url(#ridge)"/>
          <path d="M590 275l-35 15-20 40-28 35-6 25-20 40-15 50-40 56" fill="none" stroke="#dedede" stroke-width="18" filter="url(#ridge)"/>
          <path d="M555 275l-18 40-37 40M505 395l-20 45-15 50-50 46" fill="none" stroke="#f3f3f3" stroke-width="7" filter="url(#ridge)"/>
          <rect x="30" y="20" width="580" height="530" filter="url(#rough)" opacity=".3"/>
        </g>
      </g>
    </svg>
  </section>
</main>
</body>
</html>
```
FILE: styles.css
```css
* { box-sizing: border-box; }

body {
  margin: 0;
  min-height: 100vh;
  display: flex;
  flex-direction: column;
  background: #f0f0f0;
  color: #000;
  font: 15px/20px "Open Sans", "Noto Sans CJK SC", sans-serif;
  overflow-x: hidden;
}

button {
  flex: none;
  margin: 0;
  padding: 0;
  border: 0;
  background: none;
  color: inherit;
  font: inherit;
}

h1, h2, p { margin: 0; font-weight: 400; }

.defs { position: absolute; width: 0; height: 0; }

.titlebar {
  display: flex;
  align-items: center;
  gap: 6px;
  height: 29px;
  padding-left: 1px;
  background: #f3f3f3;
}
.titlebar h1 { font-size: 15px; }
.logo { width: 20px; height: 20px; }

.menubar {
  display: flex;
  gap: 17px;
  height: 25px;
  padding-left: 10px;
  border-bottom: 1px solid #d2d2d2;
  white-space: nowrap;
}
u { text-underline-offset: 2px; text-decoration-thickness: 1px; }

.toolbar {
  display: flex;
  align-items: center;
  gap: 1px;
  height: 39px;
  padding-left: 4px;
  border-bottom: 1px solid #b8b8b8;
  background: linear-gradient(#fafafa, #eeeeee);
  overflow: hidden;
}
.toolbar button {
  display: grid;
  place-items: center;
  width: 32px;
  height: 32px;
}
.toolbar svg { width: 24px; height: 24px; overflow: visible; }
.toolbar .active {
  border: 1px solid #a9a9a9;
  border-radius: 3px;
  background: #dcdcdc;
}
.off > svg { opacity: .4; filter: grayscale(.6); }

.toolbar .drop, .dock-tools .drop { width: 14px; display: grid; place-items: center; }
.drop::before {
  content: "";
  border: 5px solid transparent;
  border-top-color: #4a4a4a;
  border-bottom: 0;
}
.drop.off::before { border-top-color: #a0a0a0; }

.grip {
  flex: none;
  width: 9px;
  height: 20px;
  background: radial-gradient(circle, #b0b0b0 0 1px, transparent 1px) 0 0 / 3px 3px repeat;
  background-clip: content-box;
  padding: 0 3px 0 0;
  margin-left: 8px;
}
.grip:first-child { margin-left: 0; }
.sep {
  flex: none;
  width: 7px;
  height: 20px;
  background: linear-gradient(#d6d6d6, #d6d6d6) center / 1px 100% no-repeat;
}

.tagtext { font: bold 8px "Liberation Serif", serif; }
.glyph-a { font: 12px "DejaVu Sans", sans-serif; fill: #333; }
.ratio { font: bold 9px "Liberation Sans", sans-serif; fill: #222; }
.info { font: italic bold 15px "Liberation Serif", serif; fill: #fff; }
.question { font: 16px "Liberation Serif", serif; fill: #fff; }

.workspace { flex: 1; display: flex; }
.dock {
  width: 372px;
  display: flex;
  flex-direction: column;
}
.dock-title {
  display: flex;
  align-items: center;
  gap: 3px;
  height: 20px;
  padding: 0 2px 0 3px;
}
.dock-title h2 { flex: 1; font-size: 15px; }
.dock-title svg { display: block; width: 11px; height: 11px; }
.dock-tools {
  display: flex;
  align-items: center;
  gap: 1px;
  height: 30px;
  padding: 0 3px 2px;
}
.dock-tools button { width: 24px; height: 24px; display: grid; place-items: center; }
.dock-tools svg { width: 16px; height: 16px; }

.tree {
  flex: 1;
  border: solid #b5b5b5;
  border-width: 1px 1px 0 0;
  background: #fff;
}
.row {
  display: flex;
  align-items: center;
  height: 22px;
  padding: 0 16px 0 6px;
  font-weight: 700;
}
.row.short { height: 21px; }
.row.selected {
  background:
    linear-gradient(#b5d8f0, #b5d8f0) right top / calc(100% - 74px) 1px no-repeat,
    linear-gradient(#b5d8f0, #b5d8f0) right bottom / calc(100% - 74px) 1px no-repeat,
    linear-gradient(#fbfdff, #e8f3fd) right / calc(100% - 74px) 100% no-repeat;
}
.twist, .twist-gap { flex: none; width: 12px; height: 20px; }
.twist { display: grid; place-items: center; }
.twist::before {
  content: "";
  border: 5px solid transparent;
  border-left-color: #555;
  border-right: 0;
}
.twist.open::before {
  border: 5px solid transparent;
  border-top-color: #555;
  border-bottom: 0;
}
.row input {
  appearance: none;
  flex: none;
  display: grid;
  place-items: center;
  width: 17px;
  height: 17px;
  margin: 0 8px 0 10px;
  border: 1px solid #b8b8b8;
  background: #fff;
}
.row input:checked::before {
  content: "";
  width: 11px;
  height: 12px;
  background: #000;
  clip-path: polygon(0 48%, 18% 42%, 38% 70%, 82% 0, 100% 6%, 44% 100%, 32% 100%);
}
.kind { flex: none; width: 17px; height: 17px; }
.swatch {
  width: 18px;
  height: 18px;
  margin: 0 1px 0 -2px;
  border: 1px solid #42304a;
  background: #8d5a99;
}
.row label { flex: 1; margin-left: 7px; white-space: nowrap; }
.hidden-layer label { color: #808080; font-size: 17px; font-style: italic; }
.mem { width: 18px; height: 18px; }

.legend { padding-left: 53px; }
.legend p { line-height: 21px; }
.ramp { display: flex; gap: 8px; height: 96px; }
.bar { width: 16px; background: linear-gradient(#fff, #000); }
.limits {
  display: flex;
  flex-direction: column;
  justify-content: space-between;
  padding-top: 2px;
  font: 13px/14px "Liberation Mono", monospace;
}

.splitter {
  display: grid;
  place-items: center end;
  width: 8px;
  padding: 192px 2px 0 0;
  border-right: 1px solid #b0b0b0;
}
.splitter::before {
  content: "";
  width: 3px;
  height: 18px;
  background: radial-gradient(circle, #bbb 0 1px, transparent 1px) 0 0 / 3px 3px;
}
.canvas {
  flex: 1;
  padding: 107px 84px 0 76px;
  border-top: 1px solid #b0b0b0;
  background: #fff;
}
.map { display: block; width: 100%; }
```
